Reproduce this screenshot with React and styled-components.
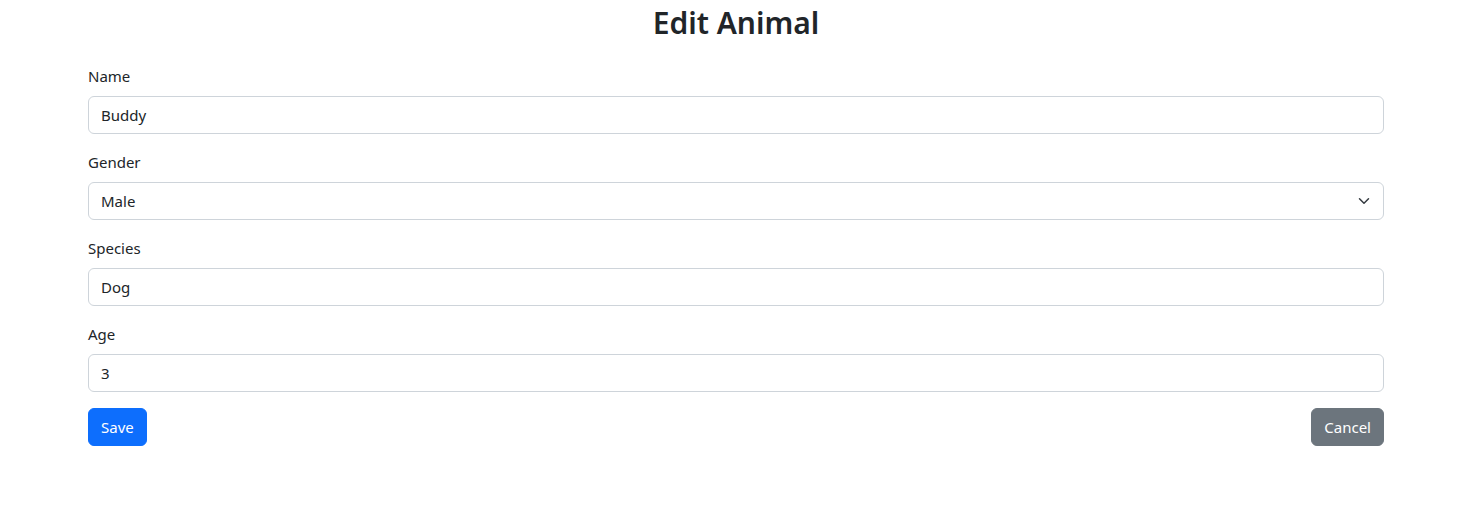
import React from 'react';
import styled, { createGlobalStyle } from 'styled-components';

const GlobalStyle = createGlobalStyle`
  body {
    margin: 0;
    background: #fff;
    color: #212529;
    font-family: "Segoe UI", "Noto Sans", "Liberation Sans", sans-serif;
    font-size: 16px;
    line-height: 1.5;
  }
  * {
    box-sizing: border-box;
  }
`;

const Page = styled.div`
  width: 1296px;
  margin-left: 88px;
`;

const Title = styled.h2`
  margin: 0 0 22px;
  padding-top: 4px;
  text-align: center;
  font-size: 30px;
  font-weight: 600;
  line-height: 38px;
`;

const Form = styled.form`
  display: flex;
  flex-direction: column;
`;

const Field = styled.div`
  margin-bottom: 16px;
`;

const Label = styled.label`
  display: block;
  margin-bottom: 8px;
  font-size: 15px;
  line-height: 24px;
`;

const Input = styled.input`
  display: block;
  width: 100%;
  height: 38px;
  padding: 6px 12px;
  font: inherit;
  font-size: 15px;
  color: #212529;
  background: #fff;
  border: 1px solid #ced4da;
  border-radius: 6px;
  outline: none;
`;

const SelectWrap = styled.div`
  position: relative;
`;

const Select = styled.select`
  display: block;
  width: 100%;
  height: 38px;
  padding: 6px 36px 6px 12px;
  font: inherit;
  font-size: 15px;
  color: #212529;
  background: #fff;
  border: 1px solid #ced4da;
  border-radius: 6px;
  appearance: none;
  outline: none;
`;

const Chevron = styled.svg`
  position: absolute;
  right: 12px;
  top: 13px;
  width: 16px;
  height: 12px;
  pointer-events: none;
`;

const Actions = styled.div`
  display: flex;
  justify-content: space-between;
  align-items: center;
`;

const Button = styled.button`
  height: 38px;
  padding: 6px 12px;
  font: inherit;
  font-size: 15px;
  color: #fff;
  background: ${props => (props.secondary ? '#6c757d' : '#0d6efd')};
  border: 1px solid ${props => (props.secondary ? '#6c757d' : '#0d6efd')};
  border-radius: 6px;
  cursor: pointer;
`;

export default function App() {
  return (
    <Page>
      <GlobalStyle />
      <Title>Edit Animal</Title>
      <Form onSubmit={e => e.preventDefault()}>
        <Field>
          <Label htmlFor="name">Name</Label>
          <Input id="name" defaultValue="Buddy" />
        </Field>
        <Field>
          <Label htmlFor="gender">Gender</Label>
          <SelectWrap>
            <Select id="gender" defaultValue="Male">
              <option>Male</option>
              <option>Female</option>
            </Select>
            <Chevron viewBox="0 0 16 16">
              <path d="m2 5 6 6 6-6" fill="none" stroke="#343a40" strokeWidth="2" strokeLinecap="round" strokeLinejoin="round" />
            </Chevron>
          </SelectWrap>
        </Field>
        <Field>
          <Label htmlFor="species">Species</Label>
          <Input id="species" defaultValue="Dog" />
        </Field>
        <Field>
          <Label htmlFor="age">Age</Label>
          <Input id="age" defaultValue="3" />
        </Field>
        <Actions>
          <Button type="submit">Save</Button>
          <Button type="button" secondary>Cancel</Button>
        </Actions>
      </Form>
    </Page>
  );
}
